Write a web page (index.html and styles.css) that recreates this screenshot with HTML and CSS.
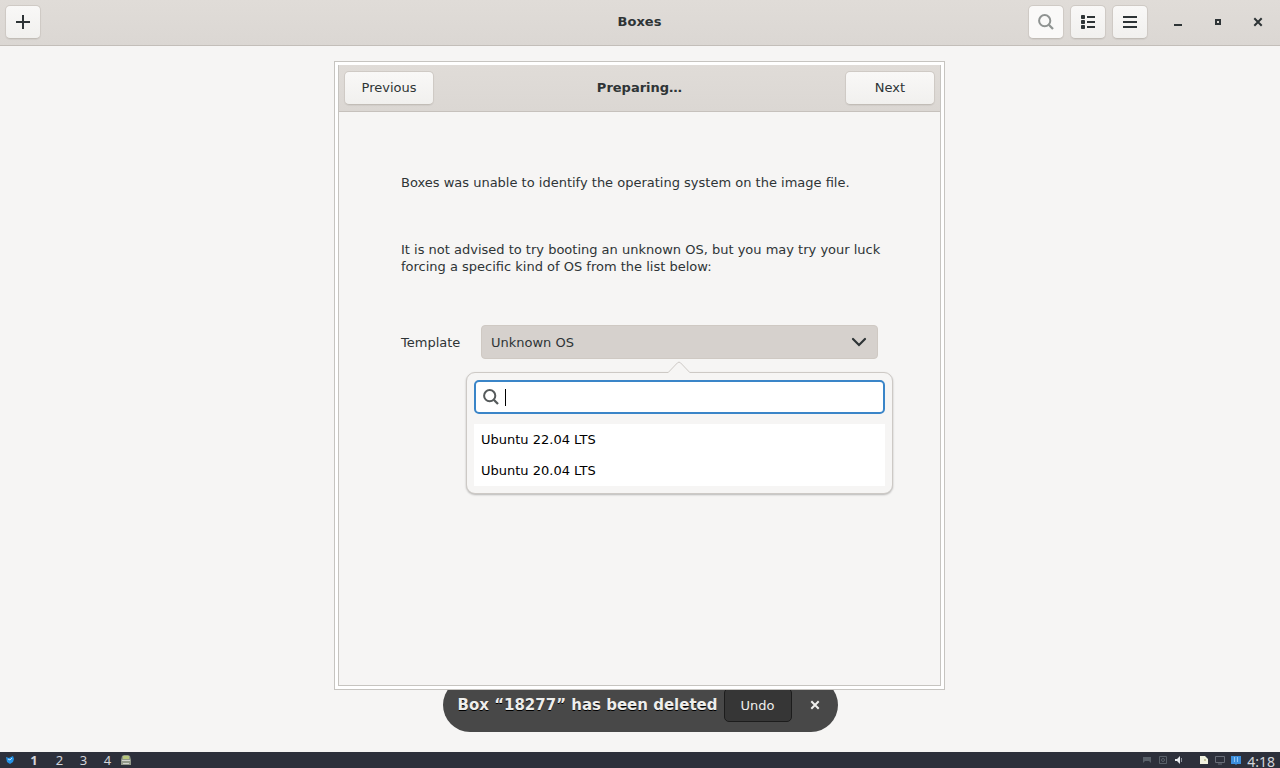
FILE: index.html
```html
<!DOCTYPE html>
<html lang="en">
<head>
  <meta charset="UTF-8">
  <meta name="viewport" content="width=device-width, initial-scale=1.0">
  <title>Boxes</title>
  <link rel="stylesheet" href="styles.css">
</head>
<body>

  <!-- Window title bar -->
  <header class="titlebar">
    <div class="titlebar-start">
      <button class="button icon-button" aria-label="New">
        <svg width="16" height="16" viewBox="0 0 16 16"><path d="M8 1v14M1 8h14" stroke="#2e3436" stroke-width="2"/></svg>
      </button>
    </div>
    <h1 class="title">Boxes</h1>
    <div class="titlebar-end">
      <button class="button icon-button search-button" aria-label="Search">
        <svg width="16" height="16" viewBox="0 0 16 16" fill="none" stroke="#8f9391" stroke-width="2"><circle cx="6.7" cy="6.7" r="5.6"/><path d="M10.8 10.8l4.2 4.2" stroke-width="2.3"/></svg>
      </button>
      <button class="button icon-button" aria-label="List view">
        <svg width="16" height="16" viewBox="0 0 16 16" fill="#2e3436"><rect x="1" y="1" width="4" height="4" rx=".8"/><rect x="1" y="6" width="4" height="4" rx=".8"/><rect x="1" y="11" width="4" height="4" rx=".8"/><path d="M7 2h8v2H7zM7 7h8v2H7zM7 12h8v2H7z"/></svg>
      </button>
      <button class="button icon-button" aria-label="Menu">
        <svg width="16" height="16" viewBox="0 0 16 16" fill="#2e3436"><path d="M1 2h14v2H1zM1 7h14v2H1zM1 12h14v2H1z"/></svg>
      </button>
      <div class="window-controls">
        <svg width="16" height="16" viewBox="0 0 16 16" fill="#2e3436"><path d="M4 10h8v2H4z"/></svg>
        <svg width="16" height="16" viewBox="0 0 16 16" fill="none" stroke="#2e3436" stroke-width="2"><path d="M6 6h4v4H6z"/></svg>
        <svg width="16" height="16" viewBox="0 0 16 16" fill="none" stroke="#2e3436" stroke-width="2"><path d="M4.3 4.3l7.4 7.4M11.7 4.3l-7.4 7.4"/></svg>
      </div>
    </div>
  </header>

  <main class="content">
    <!-- Assistant dialog -->
    <section class="dialog">
      <div class="dialog-inner">
        <div class="dialog-header">
          <button class="button text-button">Previous</button>
          <h2 class="title">Preparing…</h2>
          <button class="button text-button">Next</button>
        </div>
        <div class="dialog-body">
          <p class="message">Boxes was unable to identify the operating system on the image file.</p>
          <p class="message">It is not advised to try booting an unknown OS, but you may try your luck<br>forcing a specific kind of OS from the list below:</p>
          <div class="template-row">
            <span class="template-label">Template</span>
            <div class="combo">
              <span>Unknown OS</span>
              <svg width="16" height="16" viewBox="0 0 16 16" fill="none" stroke="#2e3436" stroke-width="2.2" stroke-linecap="round"><path d="M2 5l6 6 6-6"/></svg>
              <div class="popover">
                <svg class="popover-arrow" width="24" height="12" viewBox="0 0 24 12"><path d="M0 12l1-.5L10.5 1.8q1.5-1.5 3 0L23 11.5l1 .5z" fill="#f6f5f4"/><path d="M0 11.5h1.2L10.5 1.8q1.5-1.5 3 0l9.3 9.7H24" fill="none" stroke="#cdc9c5"/></svg>
                <div class="search-entry">
                  <svg width="16" height="16" viewBox="0 0 16 16" fill="none" stroke="#555a5b" stroke-width="2"><circle cx="6.7" cy="6.7" r="5.6"/><path d="M10.8 10.8l4.2 4.2" stroke-width="2.3"/></svg>
                  <span class="cursor"></span>
                </div>
                <ul class="os-list">
                  <li>Ubuntu 22.04 LTS</li>
                  <li>Ubuntu 20.04 LTS</li>
                </ul>
              </div>
            </div>
          </div>
        </div>
      </div>
    </section>

    <!-- Undo notification -->
    <div class="toast">
      <span class="toast-text">Box “18277” has been deleted</span>
      <button class="undo-button">Undo</button>
      <svg width="16" height="16" viewBox="0 0 16 16" fill="none" stroke="#eeeeec" stroke-width="2"><path d="M4.3 4.3l7.4 7.4M11.7 4.3l-7.4 7.4"/></svg>
    </div>
  </main>

  <!-- Desktop panel -->
  <footer class="panel">
    <div class="workspaces">
      <svg class="launcher" width="10" height="10" viewBox="0 0 10 10"><path d="M1 2l3 1 4-2 1 3-1 3-3 2-3-2z" fill="#2492e6"/><path d="M3 4l2 1 2-2" fill="none" stroke="#b9e2ff"/></svg>
      <span class="workspace active">1</span>
      <span class="workspace">2</span>
      <span class="workspace">3</span>
      <span class="workspace">4</span>
      <svg class="task" width="12" height="12" viewBox="0 0 12 12"><path d="M2 2l2-1h4l2 1 1 4v5H1V6z" fill="#92998a"/><path d="M3 2h6v3H3z" fill="#b8c77c"/><path d="M2 6h8v1H2zM3 9h6v1H3z" fill="#d2d4cf"/></svg>
    </div>
    <div class="tray">
      <svg width="10" height="10" viewBox="0 0 10 10"><path d="M1 2h8v6L7 6H3L1 8z" fill="#596069"/></svg>
      <svg width="10" height="10" viewBox="0 0 10 10" fill="none" stroke="#596069"><path d="M1.5 1.5h7v7h-7z"/><circle cx="5" cy="5" r="1.5"/></svg>
      <svg class="volume" width="10" height="10" viewBox="0 0 10 10"><path d="M1 4h2l3-3v8L3 6H1z" fill="#e8eaee"/><path d="M7.5 3v4" stroke="#8d929c"/></svg>
      <svg width="10" height="10" viewBox="0 0 10 10"><path d="M1 1h5l3 3v5H1z" fill="#f0f1df"/><path d="M5 4h2v2H5z" fill="#c8c79e"/></svg>
      <svg width="10" height="10" viewBox="0 0 10 10" fill="none" stroke="#686d78"><path d="M.5 1.5h9v6h-9zM3 9h4"/></svg>
      <svg width="10" height="10" viewBox="0 0 10 10"><path d="M0 1h10v8H6L5 10 4 9H0z" fill="#3c8fdd"/><path d="M3.5 2v5M6.5 2v5" stroke="#8fc5f5"/></svg>
      <span class="clock">4:18</span>
    </div>
  </footer>

</body>
</html>
```
FILE: styles.css
```css
* {
  box-sizing: border-box;
}

body {
  margin: 0;
  height: 768px;
  display: flex;
  flex-direction: column;
  overflow: hidden;
  background: #f6f5f4;
  color: #2e3436;
  font-family: "DejaVu Sans", sans-serif;
  font-size: 13px;
  line-height: 17px;
}

svg {
  display: block;
  flex-shrink: 0;
}

.titlebar {
  display: grid;
  grid-template-columns: 1fr auto 1fr;
  align-items: center;
  height: 46px;
  padding: 0 6px 2px 5px;
  background: linear-gradient(to bottom, #e0dcd8, #dbd7d3);
  border-bottom: 1px solid #c3beb9;
}

.title {
  margin: 0;
  font-size: 13px;
  font-weight: bold;
  text-align: center;
}

.titlebar-end {
  display: flex;
  justify-content: flex-end;
  align-items: center;
  gap: 6px;
}

.button {
  display: flex;
  align-items: center;
  justify-content: center;
  height: 34px;
  padding: 0;
  border: 1px solid #cfcac5;
  border-bottom-color: #c2bdb7;
  border-radius: 5px;
  background: linear-gradient(to top, #f1f0ee, #f9f8f7);
  box-shadow: 0 1px 1px rgba(0, 0, 0, 0.05);
  color: #2e3436;
  font: inherit;
}

.icon-button {
  width: 36px;
}

.search-button {
  background: #faf9f8;
}

.text-button {
  width: 90px;
}

.window-controls {
  display: flex;
  gap: 24px;
  margin: 0 8px 0 16px;
}

.content {
  flex: 1;
  min-height: 0;
  display: flex;
  flex-direction: column;
  align-items: center;
  padding-top: 15px;
}

/* Dialog */
.dialog {
  position: relative;
  z-index: 1;
  flex-shrink: 0;
  width: 611px;
  height: 629px;
  margin-right: 1px;
  padding: 3px;
  border: 1px solid #c6c4c0;
  background: #fff;
}

.dialog-inner {
  height: 100%;
  border: 1px solid #c6c4c0;
  border-top: none;
  background: #f6f5f4;
}

.dialog-header {
  display: flex;
  align-items: center;
  justify-content: space-between;
  height: 47px;
  padding: 0 5px 1px;
  background: linear-gradient(to bottom, #e0dcd8, #dbd7d3);
  border-bottom: 1px solid #c6c1bc;
}

.dialog-body {
  padding: 62px;
}

.message {
  margin: 0 0 50px;
  white-space: nowrap;
}

.template-row {
  display: flex;
  align-items: center;
  justify-content: space-between;
}

.combo {
  position: relative;
  display: flex;
  align-items: center;
  justify-content: space-between;
  width: 397px;
  height: 34px;
  padding: 0 10px;
  border: 1px solid #cfc9c3;
  border-radius: 4px;
  background: #d6d1cd;
}

.combo > span {
  margin-left: -1px;
}

/* Template chooser */
.popover {
  position: absolute;
  top: 46px;
  left: -16px;
  width: 427px;
  height: 122px;
  padding: 7px;
  border: 1px solid #cdc9c5;
  border-radius: 9px;
  background: #f6f5f4;
  box-shadow: 0 1px 2px rgba(0, 0, 0, 0.25);
}

.popover-arrow {
  position: absolute;
  top: -12px;
  left: 200px;
}

.search-entry {
  display: flex;
  align-items: center;
  gap: 6px;
  height: 34px;
  padding: 0 7px;
  border: 2px solid #3a85c8;
  border-radius: 5px;
  background: #fff;
}

.cursor {
  width: 1px;
  height: 17px;
  background: #000;
}

.os-list {
  margin: 10px 0 0;
  padding: 0;
  list-style: none;
  background: #fff;
  color: #000;
}

.os-list li {
  padding: 7px;
}

/* Notification */
.toast {
  display: flex;
  align-items: center;
  flex-shrink: 0;
  width: 395px;
  height: 54px;
  margin-top: -12px;
  padding: 0 15px;
  border-radius: 27px;
  background: #484848;
  color: #eeeeec;
}

.toast-text {
  flex: 1;
  font-size: 15px;
  font-weight: bold;
  white-space: nowrap;
  text-shadow: 0 1px #000;
}

.undo-button {
  width: 68px;
  height: 34px;
  margin-right: 15px;
  padding: 0;
  border: 1px solid #1c1c1c;
  border-radius: 5px;
  background: #363636;
  color: #eeeeec;
  font: inherit;
}

/* Bottom panel */
.panel {
  display: flex;
  justify-content: space-between;
  height: 16px;
  background: #2d303b;
  color: #d3d5da;
  line-height: 16px;
}

.workspaces,
.tray {
  display: flex;
  align-items: center;
}

.launcher {
  margin: 0 11px 0 5px;
}

.workspace {
  width: 24px;
  padding-left: 3px;
  font-family: "Noto Sans", sans-serif;
  text-align: center;
}

.workspace.active {
  width: 16px;
  margin-right: 4px;
  padding-left: 0;
  font-weight: bold;
}

.task {
  margin-left: 2px;
}

.tray {
  gap: 6px;
  padding-right: 5px;
}

.volume {
  margin-right: 9px;
}

.clock {
  font-family: "Noto Sans", sans-serif;
  font-size: 14px;
  line-height: 20px;
  height: 16px;
}
```
